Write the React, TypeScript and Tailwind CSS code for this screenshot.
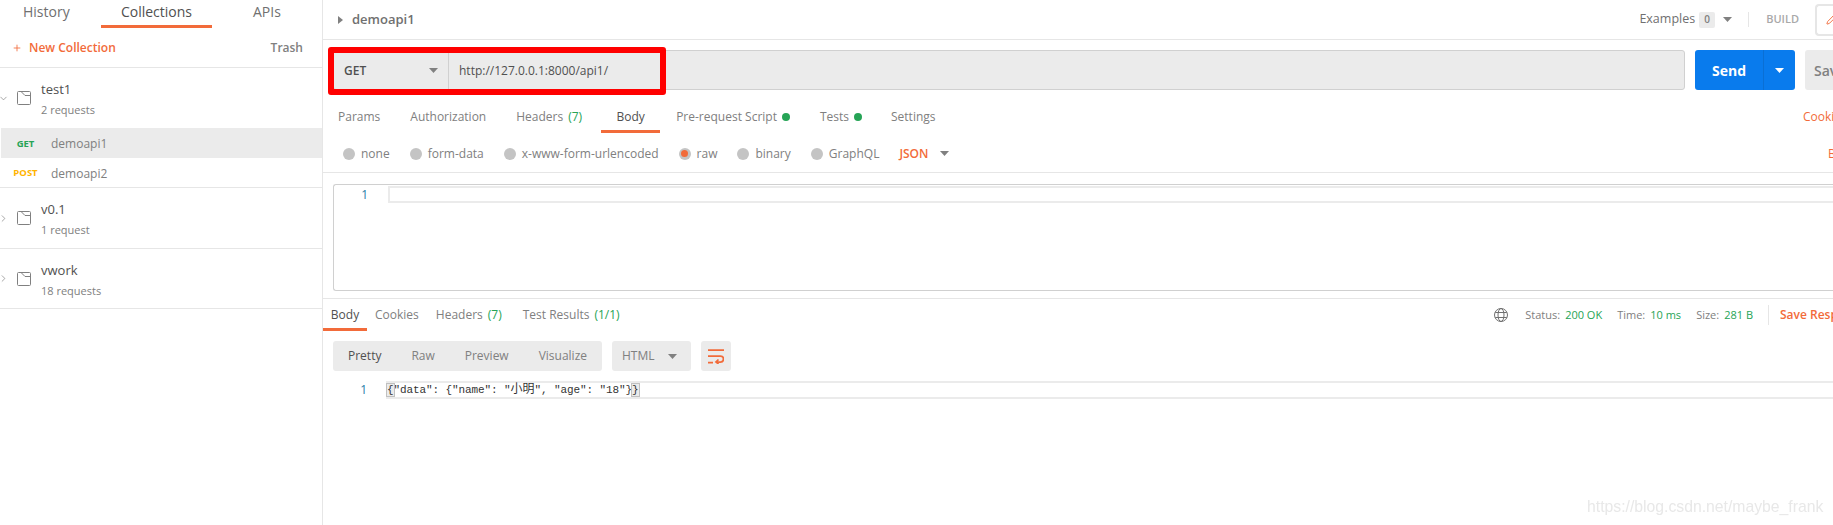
import { ChevronDown, ChevronRight, Pencil, Plus } from 'lucide-react';

const font = "font-['Open_Sans','Noto_Sans_CJK_SC',sans-serif]";

function Caret({ className }: { className: string }) {
  return (
    <svg width="9" height="5" viewBox="0 0 9 5" className={className}>
      <path d="M0 0h9L4.5 5z" fill="currentColor" />
    </svg>
  );
}

function Folder() {
  return (
    <svg width="14" height="14" viewBox="0 0 14 14" fill="none" stroke="#808080" strokeWidth="1" className="shrink-0">
      <rect x="0.5" y="0.5" width="13" height="13" rx="1" />
      <path d="M4 .5L8 4.500h5.500" />
    </svg>
  );
}

function Collection({ name, count, open, height }: { name: string; count: string; open?: boolean; height: string }) {
  const Chevron = open ? ChevronDown : ChevronRight;
  return (
    <div className={`flex items-center ${height}`}>
      <Chevron size={11} strokeWidth={1.5} className="ml-[-2px] w-[11px] shrink-0 text-[#808080]" />
      <div className="ml-[8px]">
        <Folder />
      </div>
      <div className="ml-[10px] flex flex-col gap-[3px] pt-[3px]">
        <span className="text-[13px] leading-[18px] text-[#505050]">{name}</span>
        <span className="text-[11px] leading-[18px] text-[#808080]">{count}</span>
      </div>
    </div>
  );
}

function Sidebar() {
  return (
    <aside className="flex h-[525px] w-[323px] shrink-0 flex-col border-r border-[#e6e6e6]">
      <div className="flex h-[28px] text-[14px] leading-[24px] text-[#707070]">
        <div className="w-[101px] pl-[23px]">History</div>
        <div className="w-[111px] border-b-[3px] border-[#f26b3a] text-center text-[#505050]">Collections</div>
        <div className="pl-[41px]">APIs</div>
      </div>
      <div className="flex h-[40px] items-center border-b border-[#e6e6e6] pl-[12px] pr-[19px] text-[12px]">
        <Plus size={10} strokeWidth={2} className="text-[#f26b3a]" />
        <span className="ml-[7px] font-semibold text-[#f26b3a]">New Collection</span>
        <span className="ml-auto font-semibold text-[#808080]">Trash</span>
      </div>
      <div className="border-b border-[#e6e6e6]">
        <Collection name="test1" count="2 requests" open height="h-[60px]" />
        <div className="flex h-[30px] items-center border-l border-white bg-[#ebebeb] pt-[2px] text-[12px] text-[#808080]">
          <span className="w-[50px] pr-[1px] text-center text-[9.5px] font-bold text-[#26a456]">GET</span>
          <span>demoapi1</span>
        </div>
        <div className="flex h-[29px] items-center pt-[2px] text-[12px] text-[#808080]">
          <span className="w-[51px] text-center text-[9.5px] font-bold text-[#ffb400]">POST</span>
          <span>demoapi2</span>
        </div>
      </div>
      <div className="border-b border-[#e6e6e6]">
        <Collection name="v0.1" count="1 request" height="h-[60px]" />
      </div>
      <div className="border-b border-[#e6e6e6]">
        <Collection name="vwork" count="18 requests" height="h-[59px]" />
      </div>
    </aside>
  );
}

function TopBar() {
  return (
    <div className="flex h-[40px] items-center border-b border-[#e6e6e6] pl-[15px] text-[#707070]">
      <svg width="5" height="8" viewBox="0 0 5 8" className="text-[#808080]">
        <path d="M0 0l5 4-5 4z" fill="currentColor" />
      </svg>
      <span className="ml-[9px] text-[13px] font-semibold">demoapi1</span>
      <div className="ml-auto flex items-center">
        <span className="text-[12.5px] text-[#707070]">Examples</span>
        <span className="ml-[4px] flex h-[16px] w-[16px] items-center justify-center rounded-[2px] bg-[#ebebeb] text-[10px] font-semibold text-[#808080]">0</span>
        <Caret className="ml-[8px] text-[#808080]" />
        <div className="ml-[16px] h-[15px] w-px bg-[#e6e6e6]" />
        <span className="ml-[17px] text-[11px] font-semibold text-[#a9a9a9]">BUILD</span>
        <div className="ml-[16px] flex h-[32px] w-[18px] items-center rounded-l-[4px] border-y-2 border-l-2 border-[#e6e6e6] pl-[9px]">
          <Pencil size={11} className="shrink-0 text-[#f26b3a]" />
        </div>
      </div>
    </div>
  );
}

function UrlBar() {
  return (
    <div className="flex h-[40px] items-stretch pl-[10px] pr-0 pt-[10px] box-content">
      <div className="relative flex h-[40px] w-[1352px] shrink-0 rounded-[3px] border border-[#d0d0d0] bg-[#ebebeb]">
        <div className="flex w-[115px] items-center justify-between border-r border-[#d0d0d0] pl-[10px] pr-[10px] pt-[1px] text-[12px] font-semibold text-[#505050]">
          GET
          <Caret className="text-[#808080]" />
        </div>
        <span className="ml-[10px] self-center pt-[1px] text-[12px] text-[#505050]">http://127.0.0.1:8000/api1/</span>
        {/* the red box drawn over the screenshot */}
        <div className="absolute left-[-6px] top-[-4px] h-[48px] w-[338px] rounded-[3px] border-[6px] border-[#ff0000]" />
      </div>
      <div className="ml-[10px] flex h-[40px] w-[100px] shrink-0 overflow-hidden rounded-[3px] bg-[#097bed] text-white">
        <div className="flex w-[69px] items-center justify-center border-r border-[#0a6fd4] text-[14px] font-bold">Send</div>
        <div className="flex flex-1 items-center justify-center">
          <Caret />
        </div>
      </div>
      <div className="ml-[10px] flex h-[40px] flex-1 items-center overflow-hidden rounded-l-[3px] bg-[#ebebeb] pl-[9px] text-[14px] font-semibold text-[#808080]">
        Save
      </div>
    </div>
  );
}

function Dot() {
  return <span className="ml-[5px] inline-block h-[8px] w-[8px] rounded-full bg-[#26a456]" />;
}

function RequestTabs() {
  return (
    <div className="mt-[10px] flex h-[33px] items-stretch text-[12px] text-[#808080]">
      <div className="ml-[15px] flex items-center">Params</div>
      <div className="ml-[30px] flex items-center">Authorization</div>
      <div className="ml-[30px] flex items-center">
        Headers<span className="ml-[5px] text-[#26a456]">(7)</span>
      </div>
      <div className="ml-[19px] flex w-[59px] items-center justify-center border-b-[3px] border-[#f26b3a] pt-[3px] text-[#505050]">Body</div>
      <div className="ml-[16px] flex items-center">
        Pre-request Script
        <Dot />
      </div>
      <div className="ml-[30px] flex items-center">
        Tests
        <Dot />
      </div>
      <div className="ml-[29px] flex items-center">Settings</div>
      <div className="ml-auto flex w-[30px] items-center overflow-hidden whitespace-nowrap text-[#f26b3a]">Cookies</div>
    </div>
  );
}

function Radio({ label, on }: { label: string; on?: boolean }) {
  return (
    <div className="flex items-center">
      {on ? (
        <span className="flex h-[12px] w-[12px] items-center justify-center rounded-full bg-[#c4c4c4]">
          <span className="h-[7px] w-[7px] rounded-full bg-[#f26b3a]" />
        </span>
      ) : (
        <span className="h-[12px] w-[12px] rounded-full bg-[#c4c4c4]" />
      )}
      <span className="ml-[6px]">{label}</span>
    </div>
  );
}

function BodyTypes() {
  return (
    <div className="flex h-[40px] items-center border-b border-[#e6e6e6] pl-[20px] pt-[2px] text-[12px] text-[#808080]">
      <div className="flex gap-[20px]">
        <Radio label="none" />
        <Radio label="form-data" />
        <Radio label="x-www-form-urlencoded" />
        <Radio label="raw" on />
        <Radio label="binary" />
        <Radio label="GraphQL" />
      </div>
      <span className="ml-[20px] font-semibold text-[#f26b3a]">JSON</span>
      <Caret className="ml-[12px] text-[#808080]" />
      <span className="ml-auto w-[5px] overflow-hidden text-[#f26b3a]">Beautify</span>
    </div>
  );
}

function Editor() {
  return (
    <div className="mt-[11px] ml-[10px] h-[107px] rounded-l-[3px] border-y border-l border-[#d0d0d0]">
      <div className="mt-[1px] flex h-[17px] text-[12px] leading-[17px] text-[#2a7ea8]">
        <div className="w-[54px] pr-[20px] text-right">1</div>
        <div className="flex-1 border-y-2 border-l-2 border-[#ebebeb]" />
      </div>
    </div>
  );
}

function ResponseTabs() {
  return (
    <div className="mt-[7px] flex h-[33px] items-stretch border-t border-[#e6e6e6] text-[12px] text-[#808080]">
      <div className="flex w-[44px] items-center justify-center border-b-[3px] border-[#f26b3a] pt-[3px] text-[#505050]">Body</div>
      <div className="ml-[8px] flex items-center">Cookies</div>
      <div className="ml-[17px] flex items-center">
        Headers<span className="ml-[5px] text-[#26a456]">(7)</span>
      </div>
      <div className="ml-[21px] flex items-center">
        Test Results<span className="ml-[5px] text-[#26a456]">(1/1)</span>
      </div>
      <div className="ml-auto flex items-center text-[11px]">
        <svg width="14" height="14" viewBox="0 0 14 14" fill="none" stroke="#707070" strokeWidth="1">
          <circle cx="7" cy="7" r="6.500" />
          <ellipse cx="7" cy="7" rx="3" ry="6.500" />
          <path d="M1.200 4.500h11.600M1.200 9.500h11.600" />
        </svg>
        <span className="ml-[17px]">Status:</span>
        <span className="ml-[5px] text-[#26a456]">200 OK</span>
        <span className="ml-[15px]">Time:</span>
        <span className="ml-[5px] text-[#26a456]">10 ms</span>
        <span className="ml-[15px]">Size:</span>
        <span className="ml-[5px] text-[#26a456]">281 B</span>
        <div className="ml-[15px] h-[20px] w-px bg-[#e6e6e6]" />
        <span className="ml-[11px] w-[53px] overflow-hidden whitespace-nowrap text-[12px] font-semibold text-[#f26b3a]">Save Response</span>
      </div>
    </div>
  );
}

function ResponseToolbar() {
  return (
    <div className="mt-[10px] ml-[10px] flex h-[30px] gap-[10px] text-[12px] text-[#808080]">
      <div className="flex w-[269px] items-center justify-between rounded-[3px] bg-[#ebebeb] px-[15px]">
        <span className="text-[#505050]">Pretty</span>
        <span>Raw</span>
        <span>Preview</span>
        <span>Visualize</span>
      </div>
      <div className="flex w-[79px] items-center justify-between rounded-[3px] bg-[#ebebeb] pl-[10px] pr-[14px]">
        HTML
        <Caret className="text-[#808080]" />
      </div>
      <div className="flex w-[30px] items-center justify-center rounded-[3px] bg-[#ebebeb]">
        <svg width="16" height="15" viewBox="0 0 16 15" fill="none" stroke="#f26b3a" strokeWidth="1.750">
          <path d="M0 1h16M0 7h12.500a3 3 0 0 1 0 6H8M10.500 10.500L8 13l2.500 2M0 13.500h5" />
        </svg>
      </div>
    </div>
  );
}

function ResponseBody() {
  return (
    <div className="ml-[10px] mt-[10px] flex h-[18px] font-['Liberation_Mono','Noto_Sans_CJK_SC',monospace] text-[11px] leading-[14px] tracking-[-0.1px]">
      <div className={`w-[53px] pr-[19px] text-right text-[12px] leading-[18px] tracking-normal text-[#2a7ea8] ${font}`}>1</div>
      <div className="flex-1 border-y-2 border-[#ebebeb] pl-[1px] whitespace-pre text-[#333]">
        <span className="bg-[#ebebeb] outline outline-1 outline-[#c0c0c0]">{'{'}</span>
        {'"data": {"name": "'}
        <span className="text-[12px] tracking-normal">小明</span>
        {'", "age": "18"}'}
        <span className="bg-[#ebebeb] outline outline-1 outline-[#c0c0c0]">{'}'}</span>
      </div>
    </div>
  );
}

export default function App() {
  return (
    <div className={`relative flex h-[525px] w-[1833px] overflow-hidden bg-white ${font}`}>
      <Sidebar />
      <main className="min-w-0 flex-1">
        <TopBar />
        <UrlBar />
        <RequestTabs />
        <BodyTypes />
        <Editor />
        <ResponseTabs />
        <ResponseToolbar />
        <ResponseBody />
      </main>
      <span className="absolute left-[1587px] top-[495px] font-['Liberation_Sans',sans-serif] text-[15.75px] leading-[24px] text-[#e8e8e8] blur-[0.4px]">
        https://blog.csdn.net/maybe_frank
      </span>
    </div>
  );
}
